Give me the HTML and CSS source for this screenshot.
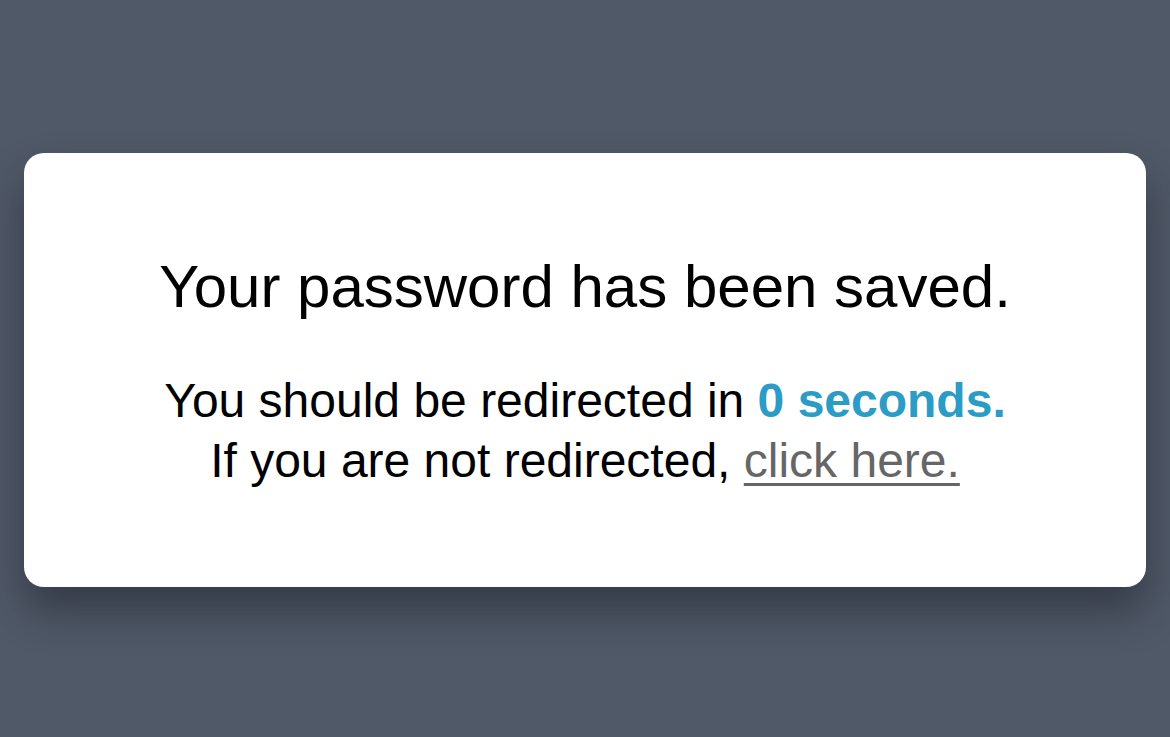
FILE: index.html
```html
<!DOCTYPE html>
<html lang="en">
<head>
    <meta charset="UTF-8">
    <meta name="viewport" content="width=device-width, initial-scale=1.0">
    <title>Password Saved</title>
    <link rel="stylesheet" href="styles.css">
</head>
<body>
    <div class="card">
        <h1>Your password has been saved.</h1>
        <p class="note">
            You should be redirected in <span class="count">0 seconds.</span><br>
            If you are not redirected, <a href="#">click here.</a>
        </p>
    </div>
</body>
</html>
```

FILE: styles.css
```css
body{
    margin: 0;
    min-height: 100vh;
    background: #505968;
    font-family: 'Liberation Sans', Arial, sans-serif;
    display: flex;
    align-items: center;
    justify-content: center;
}
.card{
    width: calc(100% - 48px);
    margin-top: 3px;
    background: #fff;
    border-radius: 20px;
    padding: 98px 20px 96px 20px;
    box-sizing: border-box;
    text-align: center;
    box-shadow: 0 24px 40px rgba(20, 24, 32, 0.45);
}
h1{
    margin: 0 0 48px 0;
    font-size: 60px;
    line-height: 72px;
    font-weight: normal;
    color: #000;
}
.note{
    margin: 0;
    font-size: 48px;
    line-height: 60px;
    color: #000;
}
.count{
    color: #2a9cc6;
    font-weight: bold;
}
.note a{
    color: #666;
    text-decoration: underline;
    text-underline-offset: 6px;
    text-decoration-thickness: 3px;
}
```
